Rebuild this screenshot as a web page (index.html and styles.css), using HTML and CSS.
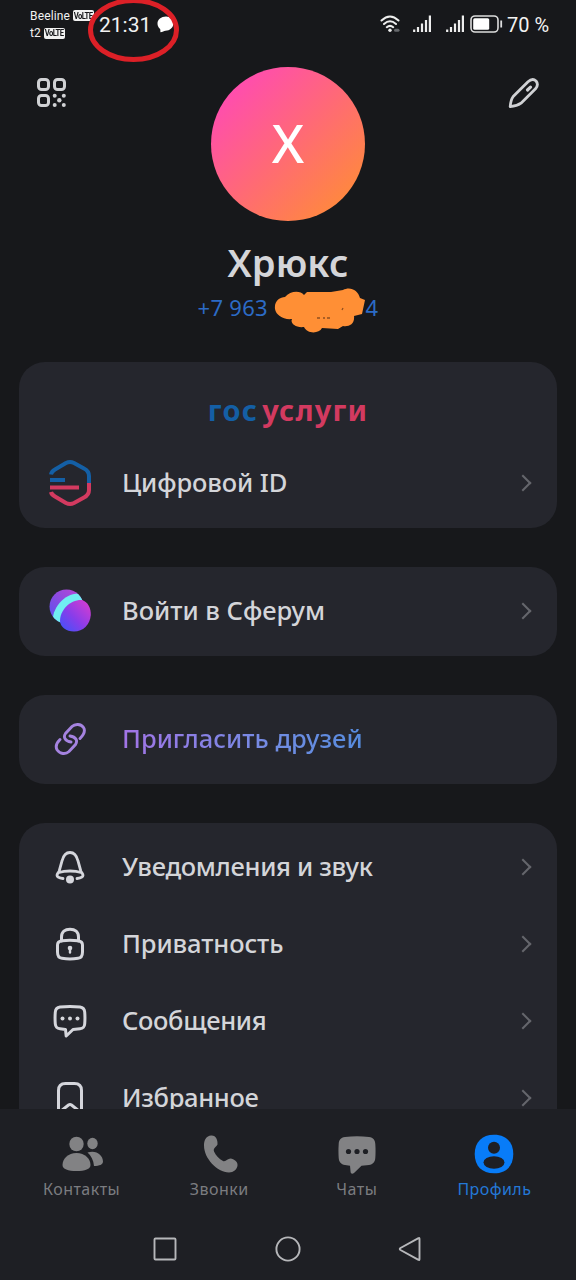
FILE: index.html
```html
<!DOCTYPE html>
<html lang="ru">
<head>
<meta charset="utf-8">
<title>Профиль</title>
<link rel="stylesheet" href="styles.css">
</head>
<body>
<div class="screen">
  <header class="status">
    <div class="carriers">
      <div class="carrier">Beeline <span class="volte"><b>VoLTE</b></span></div>
      <div class="carrier">t2 <span class="volte"><b>VoLTE</b></span></div>
    </div>
    <div class="clock">21:31</div>
    <svg class="bubble" width="17" height="17" viewBox="0 0 17 17"><path d="M9 .5C13.500 .5 16.500 3.500 16.500 7.200C16.500 11.500 12.800 14.600 8.500 14.700C7 15 5.500 16 3.500 16.300C3.200 15.300 3.600 14 3.100 12.900C1.200 11.500 .5 9.500 .5 7.600C.5 3.500 4.200 .5 9 .5Z" fill="#fff"/></svg>
    <svg class="wifi" width="22" height="18" viewBox="0 0 22 18" fill="none" stroke="#eee" stroke-width="2" stroke-linecap="round"><path d="M1.500 5.500Q10 -2.500 18.500 5.500M4 9Q10 3.500 16 9M6.800 12.200Q10 9.500 13.200 12.200"/><circle cx="10" cy="15.300" r="1.700" fill="#eee" stroke="none"/><path d="M15.500 15.300H18" stroke="#66686c" stroke-width="3"/></svg>
    <svg class="signal" width="18" height="17" viewBox="0 0 18 17" fill="none" stroke="#eee" stroke-width="2.200"><path d="M1.200 14.500V17M5 12V17M9 8.500V17M13 5V17M16.900 .500V17"/></svg>
    <svg class="signal second" width="18" height="17" viewBox="0 0 18 17" fill="none" stroke="#eee" stroke-width="2.200"><path d="M1.200 14.500V17M5 12V17M9 8.500V17M13 5V17M16.900 .500V17"/></svg>
    <svg class="battery" width="33" height="18" viewBox="0 0 33 18"><rect x="1" y="1" width="27" height="16" rx="4" fill="none" stroke="#ddd" stroke-width="1.600"/><rect x="3.200" y="3.300" width="16" height="11.400" rx="1.500" fill="#fff"/><path d="M31.200 5.500V12.500" stroke="#ddd" stroke-width="1.800"/></svg>
    <div class="percent">70 %</div>
    <svg class="marker" width="96" height="68" viewBox="0 0 96 68"><ellipse cx="47.500" cy="34" rx="43" ry="29.500" fill="none" stroke="#dc2027" stroke-width="5"/></svg>
  </header>

  <section class="hero">
    <svg class="qr" width="32" height="32" viewBox="0 0 32 32" fill="none" stroke="#d0d1d4" stroke-width="3"><rect x="3.500" y="2.500" width="10" height="10" rx="3"/><rect x="19.500" y="2.500" width="10" height="10" rx="3"/><rect x="3.500" y="18.500" width="10" height="10" rx="3"/><g fill="#d0d1d4" stroke="none"><circle cx="19.700" cy="18.700" r="2"/><circle cx="28.800" cy="18.700" r="2"/><circle cx="24.300" cy="23.300" r="2.200"/><circle cx="19.700" cy="28" r="2"/><circle cx="28.800" cy="28" r="2"/></g></svg>
    <div class="avatar">Х</div>
    <svg class="pencil" width="32" height="32" viewBox="0 0 32 32" fill="none" stroke="#d0d1d4" stroke-width="2.800" stroke-linecap="round" stroke-linejoin="round"><path d="M2.200 29.700C2.500 25.500 2.800 22.800 5.200 19.500L20 4.800Q24.500 .8 28 4Q31 7.500 27.500 11.800L13 26.200C9.500 28.800 6.500 29.400 2.200 29.700Z"/><path d="M19.500 13L22.500 10.200" stroke-width="3.200"/></svg>
    <h1 class="name">Хрюкс</h1>
    <div class="phone"><span class="head">+7 963</span><span class="tail">4</span>
      <svg class="scribble" width="94" height="48" viewBox="0 0 94 48"><path d="M2 24C1 16 7 12 12 12C17 6 27 5 31 10L34 7H58L70 5C77 1 85 5 87 13L92 15L89 29L81 31C82 39 76 42 70 41L65 44L49 43C46 49 34 49 31 42C22 43 17 38 19 34C10 35 3 30 2 24Z" fill="#ff8f35"/><path d="M44 33H47M50 33H52M54 33H57M69 25L70 23" stroke="#91501f" stroke-width="1.300"/></svg>
    </div>
  </section>

  <main class="list">
    <section class="card gos">
      <div class="brand"><span class="blue">гос</span><span class="red">услуги</span></div>
      <div class="row">
        <span class="icon"><svg width="44" height="48" viewBox="0 0 44 48" fill="none" stroke-width="4" stroke-linejoin="round"><path d="M3 15.500Q3.500 12.500 7 10.500L18 4Q22 2 26 4L36 9.500Q41 12 41 17V24" stroke="#145fa5"/><path d="M41 24V31Q41 36 36 38.500L26 44Q22 46 18 44L7 37.500Q3.500 35.500 3 33" stroke="#d33a60"/><path d="M2 21H17" stroke="#145fa5"/><path d="M2 28.500H31" stroke="#d33a60"/></svg></span>
        <span class="label t1">Цифровой ID</span><i class="chevron"></i>
      </div>
    </section>
    <section class="card single">
      <div class="row">
        <span class="icon"><svg width="44" height="44" viewBox="0 0 44 44"><defs><linearGradient id="sa" x1="1" y1="0" x2="0" y2="1"><stop offset="0" stop-color="#c044d3"/><stop offset="1" stop-color="#5450ef"/></linearGradient><linearGradient id="sb" x1="1" y1="0" x2="0" y2="1"><stop offset="0" stop-color="#df3dcd"/><stop offset=".55" stop-color="#883dea"/><stop offset="1" stop-color="#3a55fb"/></linearGradient><clipPath id="sc"><circle cx="18.500" cy="17.500" r="17"/></clipPath></defs><circle cx="18.500" cy="17.500" r="17" fill="url(#sa)"/><path clip-path="url(#sc)" d="M5 33C3 20 17 3 32 4.500L36 11L12 34Z" fill="#70edf2"/><path d="M12 32C12 21 22 10.500 34 11C40 13 43 19 42.800 26C42 36 35 42.500 26 42.500C18 42.500 12.500 38 12 32Z" fill="url(#sb)"/></svg></span>
        <span class="label t2">Войти в Сферум</span><i class="chevron"></i>
      </div>
    </section>
    <section class="card single">
      <div class="row">
        <span class="icon"><svg width="34" height="34" viewBox="0 0 34 34" fill="none" stroke="#a583e0" stroke-width="2.900" stroke-linecap="round"><path d="M18 20C12 19 10 15 12.500 11.500L19 4.500C22 1.500 28 1.700 30.500 5.500C33 9.500 30 13.500 27 16.500"/><path d="M17 14C23 15 25 18.500 22.500 22.500L16 29.500C12.500 32.800 7 32 4.200 28C1.800 24 4 20.500 7 17.500"/></svg></span>
        <span class="label invite">Пригласить друзей</span>
      </div>
    </section>
    <section class="card settings">
      <div class="row">
        <span class="icon"><svg width="32" height="36" viewBox="0 0 32 36" fill="none" stroke="#d5d6dc" stroke-width="2.800" stroke-linecap="round"><path d="M9 29.500C5 29 3 28 3 26.300C3 24.700 4.500 23.800 5.200 22L8 12C9.500 6 12 3.500 16 3.500S22.500 6 24 12L26.800 22C27.500 23.800 29 24.700 29 26.300C29 28 27 29 23 29.500M5 23.500C11 21.500 21 21.500 27 23.500"/><circle cx="16" cy="30.500" r="4" fill="#d5d6dc" stroke="none"/></svg></span>
        <span class="label t4">Уведомления и звук</span><i class="chevron"></i>
      </div>
      <div class="row">
        <span class="icon"><svg width="32" height="36" viewBox="0 0 32 36" fill="none" stroke="#d5d6dc" stroke-width="3" stroke-linecap="round"><path d="M7.500 15V11C7.500 6 11 3.200 16 3.200S24.500 6 24.500 11V15"/><path d="M8 14.800Q16 13.500 24 14.800C27.500 15.300 28.500 17 28.500 19V26C28.500 30.500 27 32 24 32.300Q16 33.500 8 32.300C5 32 3.500 30.500 3.500 26V19C3.500 17 4.500 15.300 8 14.800Z"/><circle cx="16" cy="22" r="2.300" fill="#d5d6dc" stroke="none"/><path d="M16 22V26.500" stroke-width="2.400"/></svg></span>
        <span class="label t5">Приватность</span><i class="chevron"></i>
      </div>
      <div class="row">
        <span class="icon"><svg width="34" height="36" viewBox="0 0 34 36" fill="none" stroke="#d5d6dc" stroke-width="3" stroke-linejoin="round"><path d="M7 4Q17 3 27 4C30.500 4.500 31.500 6 31.700 9Q32.200 15 31.700 21C31.500 24 30 25.500 27 25.800L20 26.500L13.200 33L12.500 26.500L7 25.800C4 25.500 2.500 24 2.300 21Q1.800 15 2.300 9C2.500 6 3.500 4.500 7 4Z"/><g fill="#d5d6dc" stroke="none"><circle cx="9.500" cy="15.500" r="2"/><circle cx="17" cy="15.500" r="2"/><circle cx="24.500" cy="15.500" r="2"/></g></svg></span>
        <span class="label t6">Сообщения</span><i class="chevron"></i>
      </div>
      <div class="row">
        <span class="icon"><svg width="32" height="36" viewBox="0 0 32 36" fill="none" stroke="#d5d6dc" stroke-width="3" stroke-linejoin="round"><path d="M4.500 33V10.500Q4.500 3.500 11.500 3.500H20.500Q27.500 3.500 27.500 10.500V33L17.500 25Q16 24 14.500 25Z"/></svg></span>
        <span class="label t7">Избранное</span><i class="chevron"></i>
      </div>
    </section>
  </main>

  <nav class="tabs">
    <div class="tab"><svg width="44" height="40" viewBox="0 0 44 40" fill="#828284"><ellipse cx="16.500" cy="10" rx="7.200" ry="7.300"/><ellipse cx="32.500" cy="9.500" rx="5.200" ry="5.800"/><path d="M16.500 19C25 19 30.500 25 30.500 31C30.500 35 25 37 16.500 37S2.500 35 2.500 31C2.500 25 8 19 16.500 19Z"/><path d="M27.500 18.500C36 15.500 43 21 43 27.500C43 30.500 39.500 32 34 32C33.500 26 31 21.500 27.500 18.500Z"/></svg><span class="n1">Контакты</span></div>
    <div class="tab"><svg width="40" height="40" viewBox="0 0 40 40" fill="#828284"><path d="M12 1.500C17 1 19 6.500 18.500 10.500C17 13.500 14 14 15 17.500C17 21.500 20 25 24 27C27 28 28.500 24.500 31.500 24.500C35 25 39 27.500 38.500 31.500C38 35.500 34.500 38.500 30 38.500C18 38 5 24.500 5 11.500C5 5.500 7.500 2 12 1.500Z"/></svg><span class="n2">Звонки</span></div>
    <div class="tab"><svg width="42" height="40" viewBox="0 0 42 40"><path d="M9 3Q21 1.500 33 3C37.500 3.500 39 6 39.300 10Q39.800 17 39.300 24C39 28 37 30.500 33 31L25.500 31.800L18 39C16 40.500 14.500 39.500 14.500 37L14 31.800L9 31C5 30.500 3 28 2.700 24Q2.200 17 2.700 10C3 6 4.500 3.500 9 3Z" fill="#828284"/><g fill="#1e1f24"><circle cx="12.500" cy="17.500" r="2.600"/><circle cx="21" cy="17.500" r="2.600"/><circle cx="29.500" cy="17.500" r="2.600"/></g></svg><span class="n3">Чаты</span></div>
    <div class="tab active"><svg width="40" height="40" viewBox="0 0 40 40"><path d="M20 .7C32 .7 39.300 8 39.300 20S32 39.300 20 39.300S.7 32 .7 20S8 .7 20 .7Z" fill="#087cf8"/><g fill="#1e1f24"><circle cx="20" cy="13.800" r="6"/><ellipse cx="20" cy="28.500" rx="10.500" ry="6.200"/></g></svg><span class="n4">Профиль</span></div>
  </nav>
  <footer class="system">
    <svg width="26" height="26" viewBox="0 0 26 26"><rect x="2.500" y="2.500" width="21" height="21" rx="1" fill="none" stroke="#b6b7ba" stroke-width="1.900"/></svg>
    <svg width="26" height="26" viewBox="0 0 26 26"><circle cx="13" cy="13" r="11.600" fill="none" stroke="#b6b7ba" stroke-width="1.900"/></svg>
    <svg width="26" height="26" viewBox="0 0 26 26"><path d="M20.500 2.200Q21.500 1.500 21.500 3V23Q21.500 24.500 20.500 23.800L2.500 14Q1 13 2.500 12Z" fill="none" stroke="#b6b7ba" stroke-width="1.900"/></svg>
  </footer>
</div>
</body>
</html>
```

FILE: styles.css
```css
* { box-sizing: border-box; }
body { margin: 0; background: #17181b; font-family: "Noto Sans", "Liberation Sans", sans-serif; color: #d4d5d9; }
svg { display: block; flex: none; }
.screen { width: 576px; height: 1280px; display: flex; flex-direction: column; overflow: hidden; }

.status { position: relative; height: 48px; display: flex; align-items: flex-start; padding-left: 30px; font-family: Roboto, sans-serif; color: #f2f2f2; }
.carriers { width: 69px; padding-top: 7px; }
.carrier { display: flex; align-items: center; gap: 3px; height: 17.500px; font-size: 12px; letter-spacing: .15px; white-space: nowrap; }
.volte { width: 21px; height: 11px; border-radius: 2px; background: #f2f2f2; color: #17181b; display: flex; align-items: center; justify-content: center; flex: none; }
.volte b { font-size: 9px; letter-spacing: -.6px; transform: scaleX(.85); }
.clock { width: 58px; margin-top: 12px; font-size: 21px; line-height: 26px; }
.bubble { margin-top: 16px; }
.wifi { margin: 15px 0 0 206px; }
.signal { margin: 15px 0 0 11px; }
.signal.second { margin-left: 15px; }
.battery { margin: 15px 0 0 6px; }
.percent { margin: 12px 0 0 4px; font-size: 20px; line-height: 26px; white-space: nowrap; }
.marker { position: absolute; left: 86px; top: -4px; z-index: 2; }

.hero { height: 314px; flex: none; padding-top: 19px; display: grid; grid-template-columns: 192px 192px 192px; grid-template-rows: 154px 73px 30px; justify-items: center; }
.qr { justify-self: start; margin: 10px 0 0 35px; }
.pencil { justify-self: end; margin: 10px 36px 0 0; }
.avatar { width: 154px; height: 154px; border-radius: 50%; background: linear-gradient(135deg, #ff4ead 15%, #ff6977 50%, #ff8740 86%); color: #fff; font-size: 53px; font-weight: 500; line-height: 152px; text-align: center; }
.name { grid-column: 1 / -1; margin: 14px 0 0; font-size: 38px; line-height: 54px; font-weight: 600; letter-spacing: .1px; }
.phone { position: relative; grid-column: 1 / -1; width: 181px; display: flex; justify-content: space-between; font-size: 22px; line-height: 30px; letter-spacing: .3px; color: #2c6bc6; margin-top: -2px; }
.scribble { position: absolute; left: 75px; top: -7px; }

.list { flex: 1; min-height: 0; overflow: hidden; padding: 0 19px; display: flex; flex-direction: column; gap: 39px; }
.card { flex: none; background: #25262d; border-radius: 26px; }
.gos { height: 166px; padding-top: 29px; }
.brand { height: 53px; text-align: center; font-size: 29px; line-height: 37px; font-weight: 700; letter-spacing: 1.2px; }
.brand .blue { color: #145fa5; margin-right: 4px; }
.brand .red { color: #d33a60; }
.single { height: 89px; padding-top: 5px; }
.settings { padding-top: 5px; }
.row { height: 77px; display: flex; align-items: center; padding: 0 28px; }
.icon { width: 46px; display: flex; justify-content: center; flex: none; }
.label { margin: -2px 0 0 29px; font-size: 25.500px; line-height: 34px; font-weight: 500; white-space: nowrap; }
.t1, .t5 { letter-spacing: -.1px; }
.t2, .invite { letter-spacing: 0; }
.t4, .t6, .t7 { letter-spacing: -.32px; }
.invite { background: linear-gradient(90deg, #a274e6, #708de3 65%, #568bdd); background-clip: text; -webkit-background-clip: text; color: transparent; }
.chevron { width: 12px; height: 12px; margin-left: auto; border: solid #65666c; border-width: 2px 2px 0 0; transform: rotate(45deg); }

.tabs { height: 109px; flex: none; background: #1e1f24; display: grid; grid-template-columns: repeat(4, 137.600px); justify-content: center; }
.tab { display: flex; flex-direction: column; align-items: center; padding-top: 25px; color: #7b7c80; font-size: 16px; line-height: 22px; gap: 4px; letter-spacing: .45px; }
.tab.active { color: #2478d7; }
.system { height: 62px; flex: none; background: #1e1f24; display: flex; justify-content: center; gap: 97px; padding-top: 18px; }
```
